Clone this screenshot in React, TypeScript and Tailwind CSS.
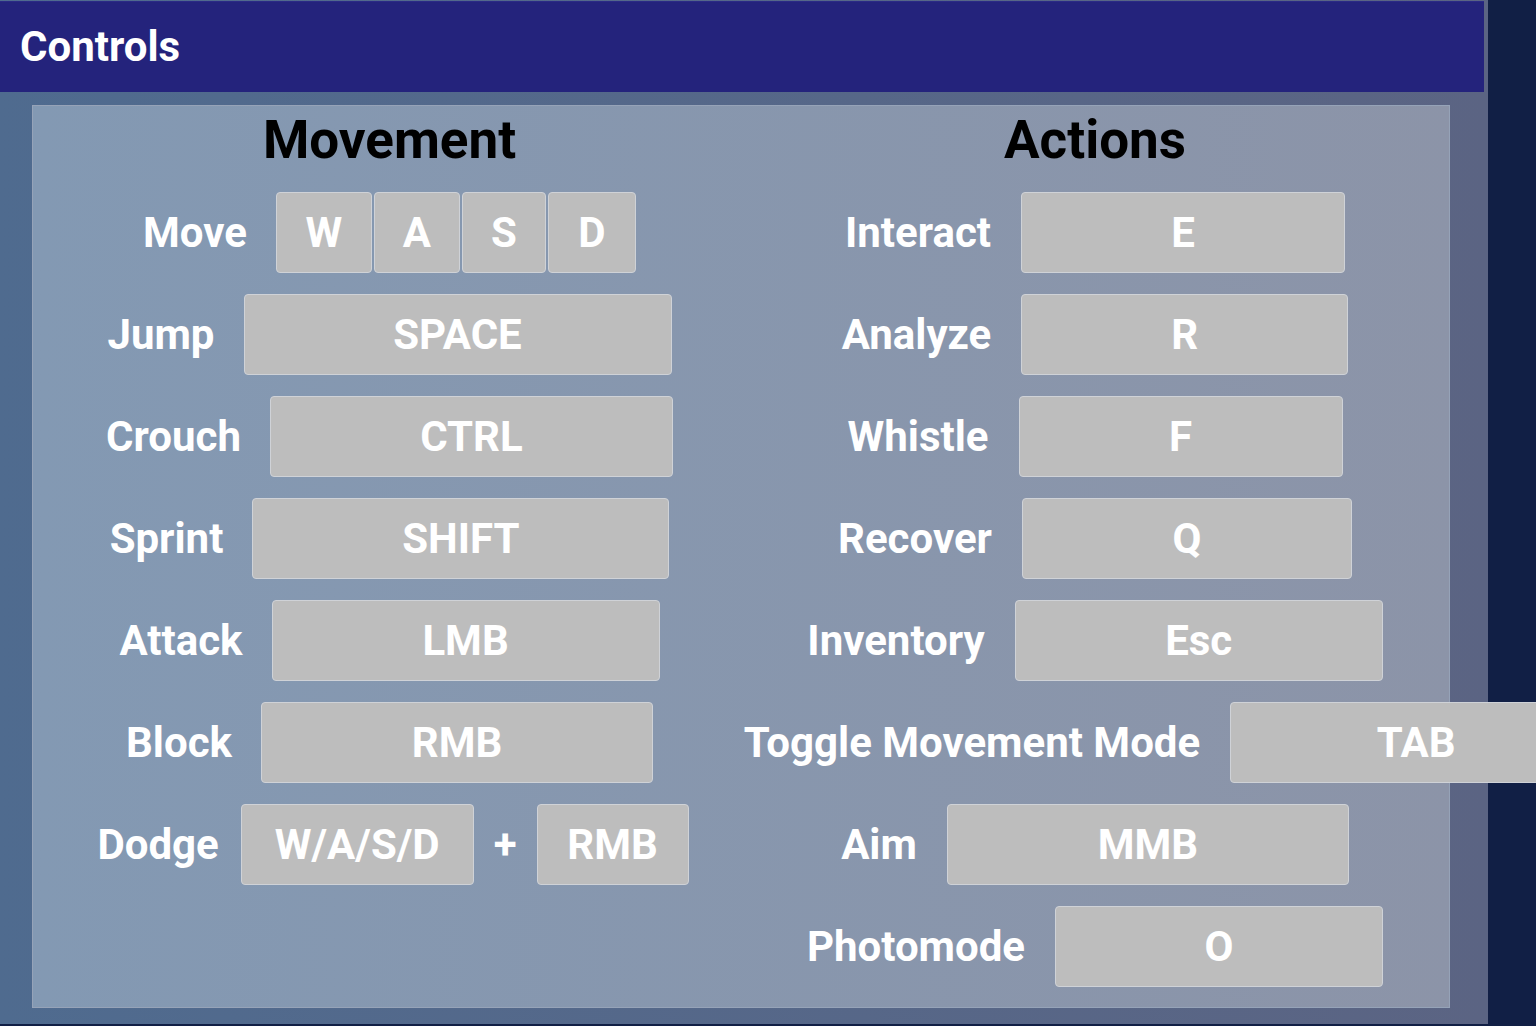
import React from "react";

type KeyProps = { label: string; w: string; extra?: string };

function Key({ label, w, extra = "" }: KeyProps) {
  return (
    <div
      className={`${w} ${extra} h-[81px] shrink-0 flex items-center justify-center rounded-[4px] border border-[#cfd2d7] bg-[#bdbdbd] text-white text-[42px] font-bold leading-none`}
    >
      {label}
    </div>
  );
}

function Label({ text }: { text: string }) {
  return <span className="text-white text-[42px] font-bold leading-none whitespace-nowrap">{text}</span>;
}

export default function App() {
  return (
    <div className="w-[1536px] h-[1026px] overflow-hidden bg-[#111f45] font-['Roboto','Liberation_Sans',sans-serif]">
      <div className="w-[1488px] h-[1024px] pt-px bg-linear-to-r from-[#4f6b8f] to-[#5b6483] flex flex-col">
        <header className="h-[91px] w-[1484px] bg-[#24237c] flex items-center pl-[20px] border-t border-[#2b2a86]">
          <h1 className="text-white text-[42px] font-bold leading-none">Controls</h1>
        </header>
        <div className="pt-[13px] pl-[32px]">
          <div className="w-[1418px] h-[903px] border border-[#96a3b8] bg-linear-to-r from-[#8399b3] to-[#8c94a8] flex">
            {/* Movement column */}
            <div className="w-[713px] shrink-0 flex flex-col items-center pt-[2px]">
              <h2 className="h-[64px] leading-[64px] text-[53px] font-bold text-black">Movement</h2>
              <div className="mt-[20px] flex flex-col gap-[21px] items-center">
                <div className="h-[81px] flex items-center gap-[29px]">
                  <Label text="Move" />
                  <div className="flex gap-[2px]">
                    <Key label="W" w="w-[96px]" />
                    <Key label="A" w="w-[86px]" />
                    <Key label="S" w="w-[84px]" />
                    <Key label="D" w="w-[88px]" />
                  </div>
                </div>
                <div className="h-[81px] flex items-center gap-[29px]">
                  <Label text="Jump" />
                  <Key label="SPACE" w="w-[428px]" />
                </div>
                <div className="h-[81px] flex items-center gap-[29px]">
                  <Label text="Crouch" />
                  <Key label="CTRL" w="w-[403px]" />
                </div>
                <div className="h-[81px] flex items-center gap-[29px]">
                  <Label text="Sprint" />
                  <Key label="SHIFT" w="w-[417px]" />
                </div>
                <div className="h-[81px] flex items-center gap-[29px]">
                  <Label text="Attack" />
                  <Key label="LMB" w="w-[388px]" />
                </div>
                <div className="h-[81px] flex items-center gap-[29px]">
                  <Label text="Block" />
                  <Key label="RMB" w="w-[392px]" />
                </div>
                <div className="h-[81px] flex items-center gap-[20px] ml-[7px]">
                  <span className="mr-[2px]">
                    <Label text="Dodge" />
                  </span>
                  <Key label="W/A/S/D" w="w-[233px]" />
                  <span className="text-white text-[42px] font-bold leading-none">+</span>
                  <Key label="RMB" w="w-[152px]" />
                </div>
              </div>
            </div>

            {/* Actions column */}
            <div className="w-[698px] shrink-0 flex flex-col items-center pt-[2px]">
              <h2 className="h-[64px] leading-[64px] text-[53px] font-bold text-black">Actions</h2>
              <div className="mt-[20px] flex flex-col gap-[21px] items-center">
                <div className="h-[81px] flex items-center gap-[30px]">
                  <Label text="Interact" />
                  <Key label="E" w="w-[324px]" />
                </div>
                <div className="h-[81px] flex items-center gap-[30px]">
                  <Label text="Analyze" />
                  <Key label="R" w="w-[327px]" />
                </div>
                <div className="h-[81px] flex items-center gap-[30px]">
                  <Label text="Whistle" />
                  <Key label="F" w="w-[324px]" />
                </div>
                <div className="h-[81px] flex items-center gap-[30px]">
                  <Label text="Recover" />
                  <Key label="Q" w="w-[330px]" />
                </div>
                <div className="h-[81px] flex items-center gap-[30px]">
                  <Label text="Inventory" />
                  <Key label="Esc" w="w-[368px]" />
                </div>
                <div className="h-[81px] flex items-center gap-[30px]">
                  <Label text="Toggle Movement Mode" />
                  <Key label="TAB" w="w-[372px]" extra="-mr-[156px]" />
                </div>
                <div className="h-[81px] flex items-center gap-[30px]">
                  <Label text="Aim" />
                  <Key label="MMB" w="w-[402px]" />
                </div>
                <div className="h-[81px] flex items-center gap-[30px]">
                  <Label text="Photomode" />
                  <Key label="O" w="w-[328px]" />
                </div>
              </div>
            </div>
          </div>
        </div>
      </div>
    </div>
  );
}
